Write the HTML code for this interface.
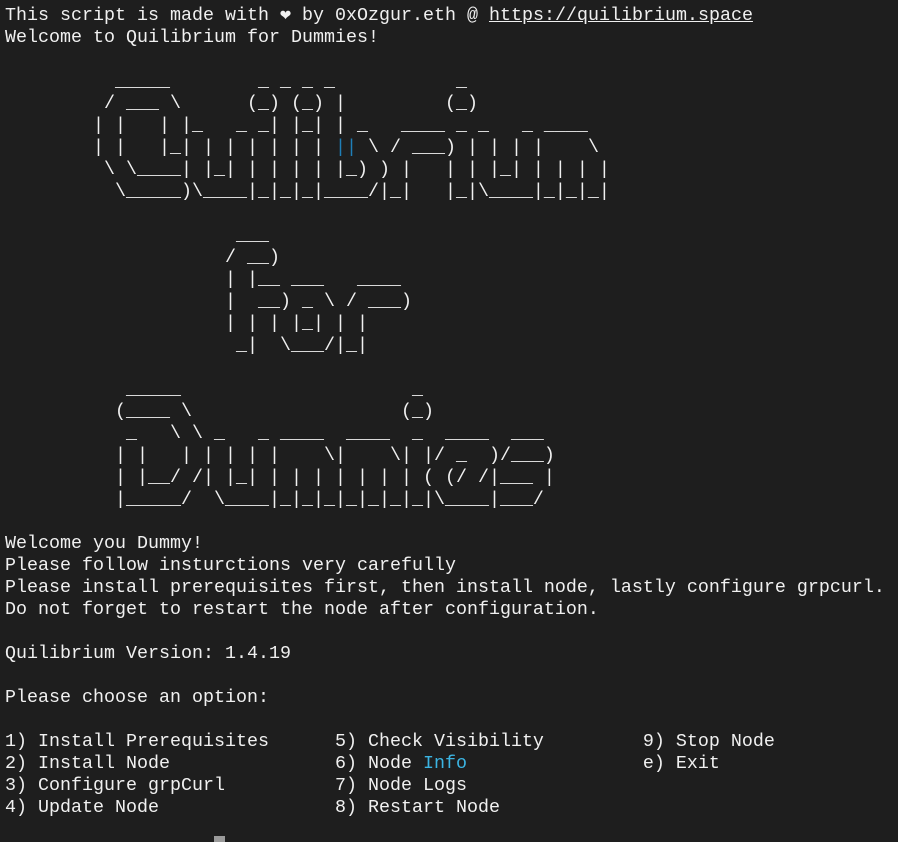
<!DOCTYPE html>
<html><head><meta charset="utf-8"><style>
html,body{margin:0;padding:0;background:#1e1e1e;width:898px;height:841px;overflow:hidden}
pre{margin:0;position:absolute;left:5px;top:5px;font-family:"Liberation Mono","DejaVu Sans Mono",monospace;font-size:18.33px;line-height:22px;color:#f0f0f0;white-space:pre}
.u{text-decoration:underline}
.b{color:#1f7fb8}
.c{color:#3bb4e2}
.cur{position:absolute;left:214px;top:836px;width:11px;height:6px;background:#9a9a9a}
</style></head><body>
<pre>This script is made with ❤ by 0xOzgur.eth @ <span class="u">https://quilibrium.space</span>
Welcome to Quilibrium for Dummies!

          _____        _ _ _ _           _
         / ___ \      (_) (_) |         (_)
        | |   | |_   _ _| |_| | _   ____ _ _   _ ____
        | |   |_| | | | | | | <span class="b">||</span> \ / ___) | | | |    \
         \ \____| |_| | | | | |_) ) |   | | |_| | | | |
          \_____)\____|_|_|_|____/|_|   |_|\____|_|_|_|

                     ___
                    / __)
                    | |__ ___   ____
                    |  __) _ \ / ___)
                    | | | |_| | |
                     _|  \___/|_|

           _____                     _
          (____ \                   (_)
           _   \ \ _   _ ____  ____  _  ____  ___
          | |   | | | | |    \|    \| |/ _  )/___)
          | |__/ /| |_| | | | | | | | ( (/ /|___ |
          |_____/  \____|_|_|_|_|_|_|_|\____|___/

Welcome you Dummy!
Please follow insturctions very carefully
Please install prerequisites first, then install node, lastly configure grpcurl.
Do not forget to restart the node after configuration.

Quilibrium Version: 1.4.19

Please choose an option:

1) Install Prerequisites      5) Check Visibility         9) Stop Node
2) Install Node               6) Node <span class="c">Info</span>                e) Exit
3) Configure grpCurl          7) Node Logs
4) Update Node                8) Restart Node
</pre>
<div class="cur"></div>
</body></html>
